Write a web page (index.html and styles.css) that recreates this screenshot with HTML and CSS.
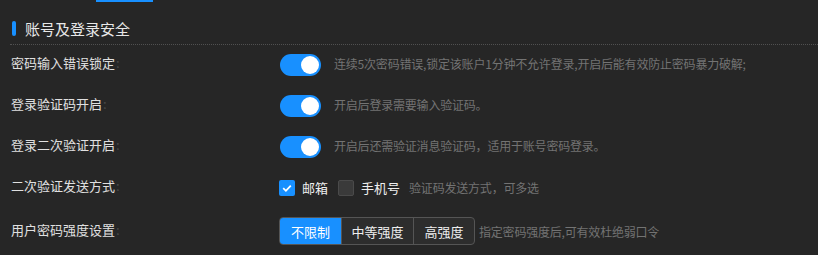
FILE: index.html
```html
<!DOCTYPE html>
<html lang="zh-CN">
<head>
<meta charset="utf-8">
<link rel="stylesheet" href="styles.css">
</head>
<body>
<div class="topbar"></div>
<div class="section-title"><span class="mark"></span><span>账号及登录安全</span></div>
<div class="form">
  <div class="row">
    <div class="label">密码输入错误锁定<span class="colon">:</span></div>
    <span class="switch"><span class="knob"></span></span>
    <span class="desc desc-switch">连续5次密码错误,锁定该账户1分钟不允许登录,开启后能有效防止密码暴力破解;</span>
  </div>
  <div class="row">
    <div class="label">登录验证码开启<span class="colon">:</span></div>
    <span class="switch"><span class="knob"></span></span>
    <span class="desc desc-switch">开启后登录需要输入验证码。</span>
  </div>
  <div class="row">
    <div class="label">登录二次验证开启<span class="colon">:</span></div>
    <span class="switch"><span class="knob"></span></span>
    <span class="desc desc-switch">开启后还需验证消息验证码，适用于账号密码登录。</span>
  </div>
  <div class="row">
    <div class="label">二次验证发送方式<span class="colon">:</span></div>
    <span class="check checked"><svg width="12" height="12" viewBox="0 0 12 12"><path d="M2.2 6.2 L4.9 8.8 L9.8 3.6" fill="none" stroke="#fff" stroke-width="1.8"/></svg></span>
    <span class="check-text">邮箱</span>
    <span class="check unchecked"></span>
    <span class="check-text">手机号</span>
    <span class="desc desc-check">验证码发送方式，可多选</span>
  </div>
  <div class="row">
    <div class="label">用户密码强度设置<span class="colon">:</span></div>
    <div class="btn-group">
      <span class="btn active">不限制</span>
      <span class="btn">中等强度</span>
      <span class="btn">高强度</span>
    </div>
    <span class="desc desc-btn">指定密码强度后,可有效杜绝弱口令</span>
  </div>
</div>
</body>
</html>
```
FILE: styles.css
```css
html, body {
  margin: 0;
  padding: 0;
  background: #262626;
  font-family: "Noto Sans CJK SC", "Noto Sans", sans-serif;
  color: #e2e2e2;
}
.topbar {
  margin-left: 96px;
  width: 57px;
  height: 2px;
  background: #1890ff;
}
.section-title {
  margin: 16px 0 0 10px;
  padding: 0 0 5px 2px;
  height: 21px;
  display: flex;
  align-items: center;
  gap: 9px;
  font-size: 15px;
  color: #e8e8e8;
  border-bottom: 1px dotted #505050;
}
.mark {
  width: 4px;
  height: 15px;
  border-radius: 2px;
  background: #1890ff;
}
.form {
  display: flex;
  flex-direction: column;
  gap: 18px;
  padding-top: 8px;
}
.row {
  display: flex;
  align-items: center;
  min-height: 22px;
}
.label {
  width: 268px;
  padding-left: 11px;
  padding-bottom: 4px;
  flex-shrink: 0;
  font-size: 13px;
  color: #e0e0e0;
}
.colon {
  color: #4a4a4a;
  margin-left: 1px;
}
.switch {
  position: relative;
  width: 41px;
  height: 22px;
  border-radius: 11px;
  background: #1890ff;
  flex-shrink: 0;
  margin-left: 1px;
}
.knob {
  position: absolute;
  right: 2px;
  top: 2px;
  width: 18px;
  height: 18px;
  border-radius: 50%;
  background: #fff;
}
.desc {
  font-size: 12px;
  color: #737373;
  letter-spacing: -0.2px;
}
.desc-switch { margin-left: 13px; padding-bottom: 3px; }
.check {
  width: 16px;
  height: 16px;
  border-radius: 2px;
  box-sizing: border-box;
  display: flex;
  align-items: center;
  justify-content: center;
  flex-shrink: 0;
}
.checked { background: #1890ff; }
.unchecked {
  background: #3a3a3a;
  border: 1px solid #4a4a4a;
  margin-left: 10px;
}
.check-text {
  font-size: 13px;
  color: #eeeeee;
  margin-left: 7px;
}
.desc-check { margin-left: 9px; }
.btn-group {
  display: flex;
  height: 28px;
  box-sizing: border-box;
  border: 1px solid #555;
  border-radius: 4px;
  overflow: hidden;
  background: #2d2d2d;
}
.btn {
  display: flex;
  align-items: center;
  justify-content: center;
  font-size: 13px;
  color: #eeeeee;
  padding: 0 10px;
}
.btn + .btn { border-left: 1px solid #555; }
.btn.active {
  background: #1890ff;
  color: #fff;
  width: 61px;
  padding: 0;
}
.btn:nth-child(2) { width: 71px; padding: 0; }
.btn:nth-child(3) { width: 60px; padding: 0; }
.desc-btn { margin-left: 4px; }
```
